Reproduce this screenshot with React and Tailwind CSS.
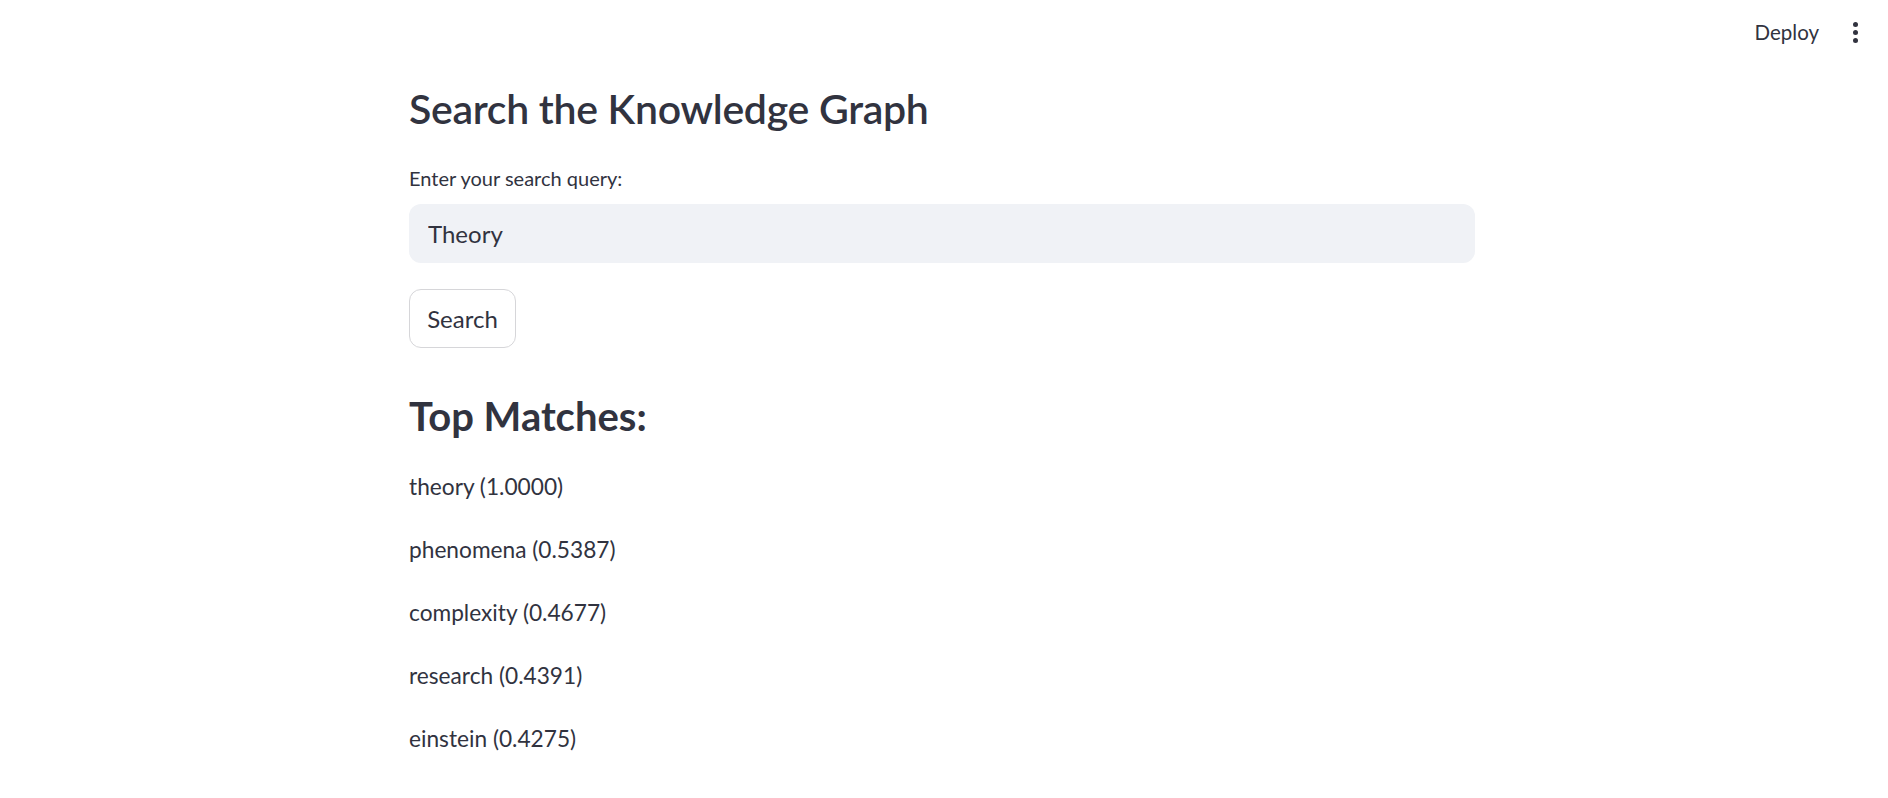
import { useState } from 'react'

const matches = [
  ['theory', '1.0000'],
  ['phenomena', '0.5387'],
  ['complexity', '0.4677'],
  ['research', '0.4391'],
  ['einstein', '0.4275'],
]

export default function App() {
  const [query, setQuery] = useState('Theory')

  return (
    <div className="min-h-screen bg-white text-[#31333f] font-['Lato','Noto_Sans',sans-serif]">
      <header className="h-[84px] flex justify-end items-start pt-[19px] pr-[30px] gap-[34px]">
        <span className="text-[20.5px] leading-[26px]">Deploy</span>
        <div className="flex flex-col items-center gap-[3px] pt-[3px]">
          <span className="w-[5px] h-[5px] rounded-full bg-[#31333f]" />
          <span className="w-[5px] h-[5px] rounded-full bg-[#31333f]" />
          <span className="w-[5px] h-[5px] rounded-full bg-[#31333f]" />
        </div>
      </header>

      <main className="w-[1070px] mx-auto flex flex-col">
        <h2 className="text-[41px] leading-[50px] font-semibold tracking-[-0.3px]">Search the Knowledge Graph</h2>

        <label className="mt-[30px] text-[20px] leading-[28px]">Enter your search query:</label>
        <div className="mt-[12px] mr-[4px] h-[59px] rounded-[12px] bg-[#f0f2f6] flex items-center pl-[19px]">
          <input
            value={query}
            onChange={e => setQuery(e.target.value)}
            className="w-full bg-transparent outline-none text-[24px] leading-[29px]"
          />
        </div>

        <button className="mt-[26px] w-[107px] h-[59px] rounded-[12px] border border-[#d6d6d9] bg-white text-[24px] leading-[29px]">
          Search
        </button>

        <h3 className="mt-[44px] text-[40px] leading-[48px] font-bold">Top Matches:</h3>

        <div className="mt-[29px] flex flex-col gap-[27px]">
          {matches.map(([word, score]) => (
            <p key={word} className="text-[22.7px] leading-[36px]">
              {word} ({score})
            </p>
          ))}
        </div>
      </main>
    </div>
  )
}
